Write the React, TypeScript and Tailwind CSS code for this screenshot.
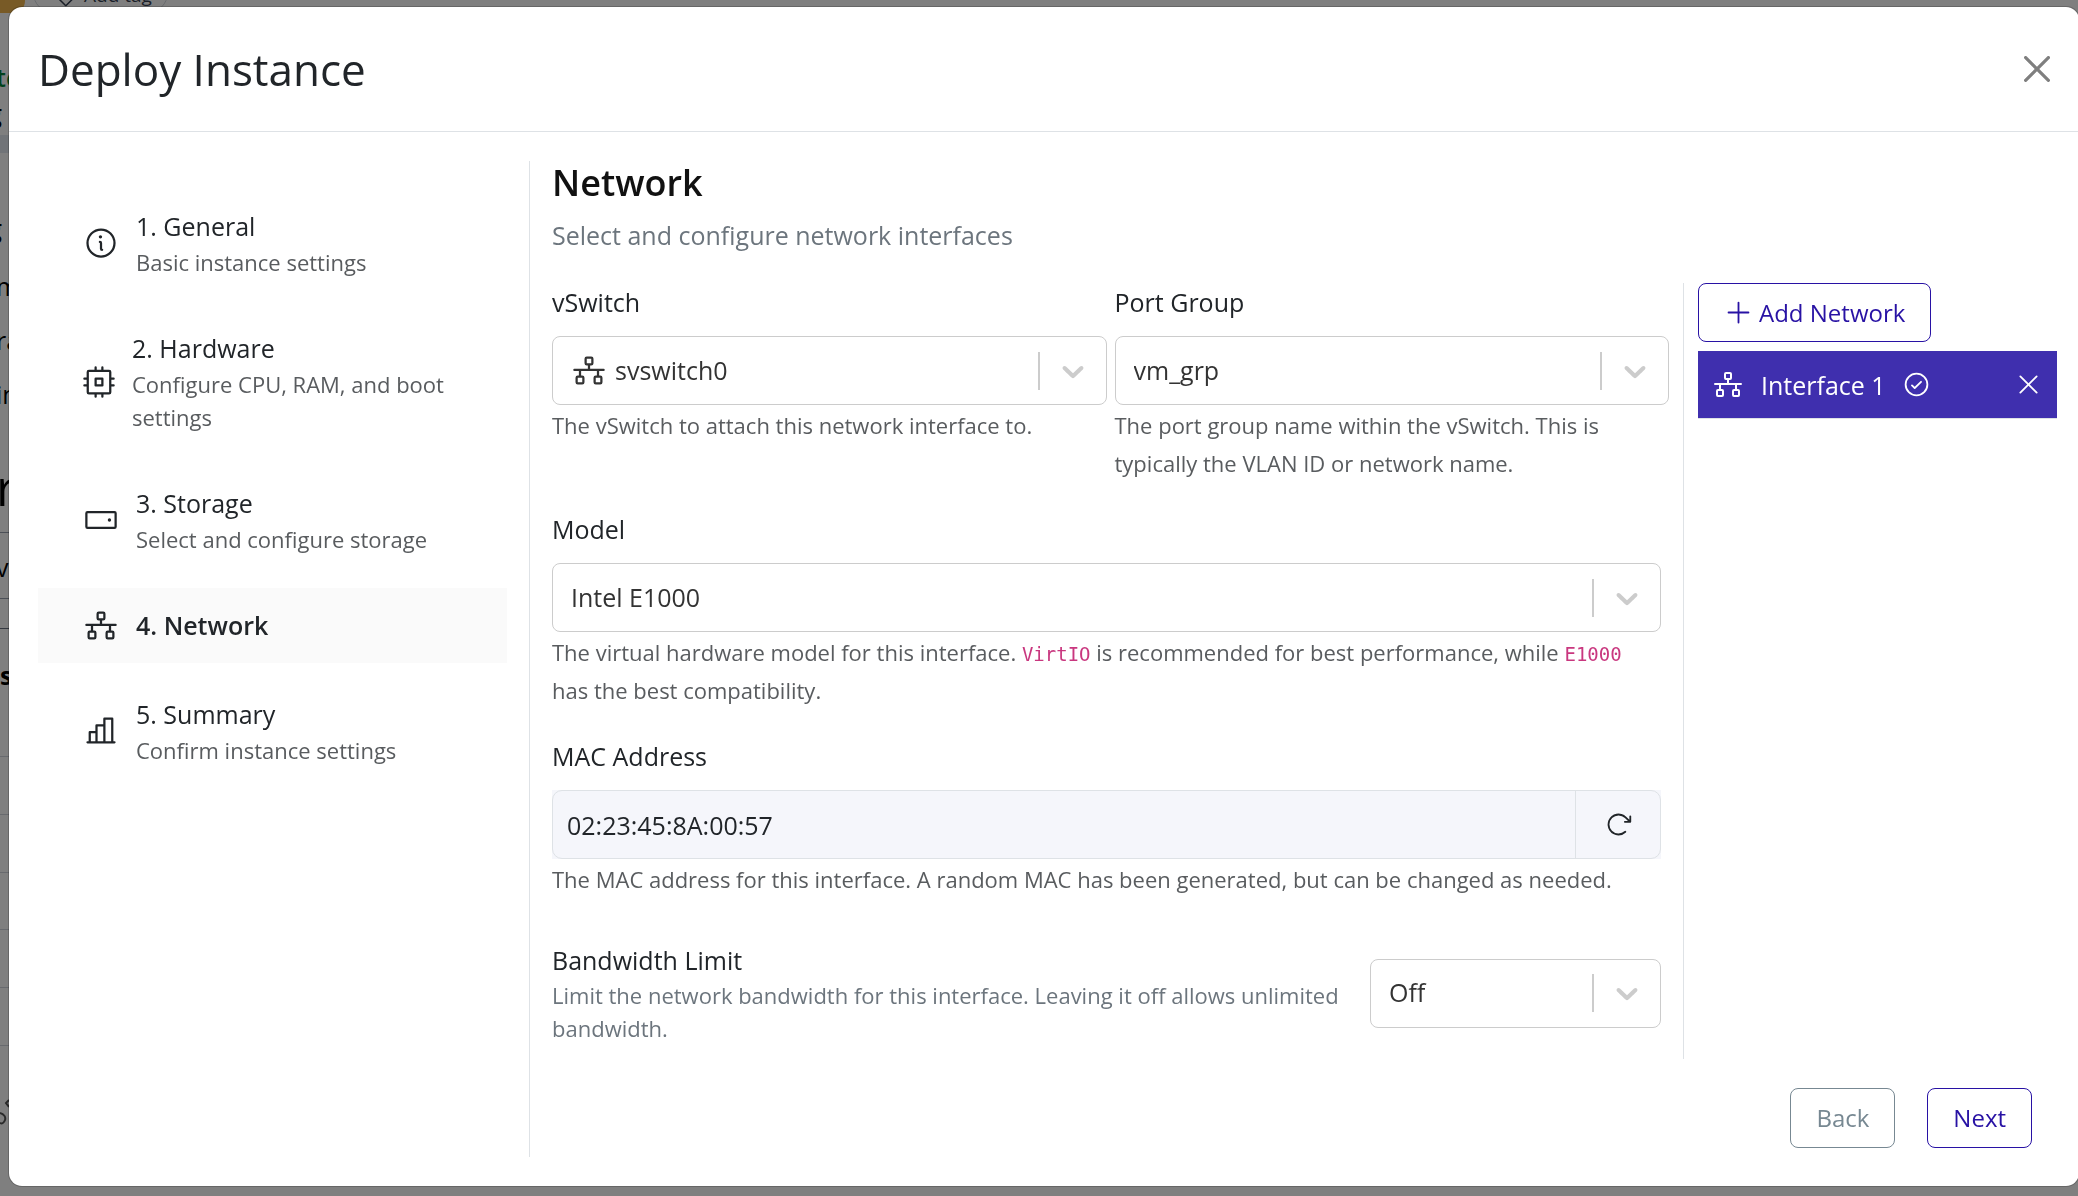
import React, { useState } from 'react';
import {
  PiArrowClockwise,
  PiChartBar,
  PiCheckCircle,
  PiCpu,
  PiHardDrive,
  PiInfo,
  PiNetwork,
  PiPlus,
  PiTag,
  PiX,
} from 'react-icons/pi';

const steps = [
  { title: '1. General', text: 'Basic instance settings', Icon: PiInfo },
  { title: '2. Hardware', text: 'Configure CPU, RAM, and boot settings', Icon: PiCpu, wide: true },
  { title: '3. Storage', text: 'Select and configure storage', Icon: PiHardDrive },
  { title: '4. Network', Icon: PiNetwork, active: true },
  { title: '5. Summary', text: 'Confirm instance settings', Icon: PiChartBar },
];

const Chevron: React.FC = () => (
  <svg viewBox="0 0 20 20" className="h-9 w-9" fill="currentColor" aria-hidden="true">
    <path d="M4.516 7.548c0.436-0.446 1.043-0.481 1.576 0l3.908 3.747 3.908-3.747c0.533-0.481 1.141-0.446 1.574 0 0.436 0.445 0.408 1.197 0 1.615-0.406 0.418-4.695 4.502-4.695 4.502-0.217 0.223-0.502 0.335-0.787 0.335s-0.57-0.112-0.789-0.335c0 0-4.287-4.084-4.695-4.502s-0.436-1.17 0-1.615z" />
  </svg>
);

interface SelectProps {
  id: string;
  options: string[];
  icon?: boolean;
}

const Select: React.FC<SelectProps> = ({ id, options, icon }) => (
  <div className="relative flex h-[69px] w-full rounded-lg border border-[#cccccc] bg-white text-[#333333]">
    {icon && (
      <PiNetwork className="pointer-events-none absolute top-4 left-[18px] h-9 w-9" aria-hidden="true" />
    )}
    <select
      id={id}
      className={`w-full appearance-none rounded-lg bg-transparent pr-[68px] pb-[2px] text-[25px] outline-none ${icon ? 'pl-[62px]' : 'pl-[18px]'}`}
    >
      {options.map((option) => (
        <option key={option}>{option}</option>
      ))}
    </select>
    <div className="pointer-events-none absolute inset-y-0 right-0 flex items-center text-[#cccccc]">
      <span className="h-[38px] w-[2px] bg-[#cccccc]"></span>
      <span className="px-[15px]">
        <Chevron />
      </span>
    </div>
  </div>
);

interface FieldProps {
  id: string;
  label: string;
  help: React.ReactNode;
  children: React.ReactNode;
}

const Field: React.FC<FieldProps> = ({ id, label, help, children }) => (
  <div className="min-w-0 flex-1">
    <label htmlFor={id} className="mb-[15px] block leading-[38px]">{label}</label>
    {children}
    <p className="mt-px text-[22px] leading-[38px] text-[#595c5f]">{help}</p>
  </div>
);

const Code: React.FC<{ children: React.ReactNode }> = ({ children }) => (
  <code className="font-['DejaVu_Sans_Mono',monospace] text-[19px] leading-none text-[#c9377f]">{children}</code>
);

/* Page that stays visible around the dialog */
const PageBehind: React.FC = () => (
  <div className="h-screen overflow-hidden bg-white" aria-hidden="true">
    <div className="flex h-[13px] items-end gap-2">
      <div className="h-[13px] w-[25px] rounded-br-xl bg-[#f0b44c]"></div>
      <div className="flex h-10 w-[135px] items-center gap-2 rounded-full border border-gray-300 pt-1 pl-[18px] text-[19px] text-gray-700">
        <PiTag className="h-6 w-6 shrink-0" />
        <span className="whitespace-nowrap">Add tag</span>
      </div>
    </div>
    <div className="w-[9px] overflow-hidden text-[25px] leading-9 whitespace-nowrap text-black">
      <div className="-ml-1 mt-[46px] font-semibold text-green-700">te</div>
      <div className="-ml-3 h-10 font-semibold">g</div>
      <div className="h-[18px] bg-slate-200"></div>
      <div className="-ml-3 mt-[57px] font-semibold">g</div>
      <div className="-ml-1 mt-[22px]">m</div>
      <div className="-ml-1 mt-[18px]">ra</div>
      <div className="-ml-1 mt-[18px]">in</div>
      <div className="-ml-1 mt-[50px] h-[70px] text-[50px] leading-[50px]">r</div>
      <div className="h-[67px] border-y border-gray-400 pt-4">
        <div className="-ml-1">v,</div>
      </div>
      <div className="h-[30px] border-b border-gray-500"></div>
      <div className="h-[128px] border-b border-gray-300 pt-7 font-bold">s</div>
      <div className="h-[58px] border-b border-gray-300"></div>
      <div className="h-[58px] border-b border-gray-300"></div>
      <div className="h-[57px] border-b border-gray-300"></div>
      <div className="h-[58px] border-b border-gray-300"></div>
      <div className="h-[58px] border-b border-gray-300"></div>
      <svg viewBox="0 0 9 30" className="mt-[50px] h-[30px] w-[9px]" fill="none" stroke="#555" strokeWidth="2">
        <path d="M9 4L6 7L9 11M0 17C4 18 6 21 5 24C4 27 2 28 0 27" />
      </svg>
    </div>
  </div>
);

const App: React.FC = () => {
  const [mac, setMac] = useState('02:23:45:8A:00:57');

  return (
    <div className="font-['Open_Sans',sans-serif] text-[25px] leading-[38px] text-[#212529]">
      <PageBehind />

      <div className="fixed inset-0 flex bg-black/50 pt-[6px] pb-[9px] pl-2">
        <div
          role="dialog"
          aria-labelledby="dialog-title"
          className="-mr-[2px] flex min-w-0 flex-1 flex-col overflow-hidden rounded-[14px] border border-black/20 bg-white bg-clip-padding"
        >
          {/* Header */}
          <div className="flex items-center justify-between border-b border-[#dee2e6] p-[29px]">
            <h1 id="dialog-title" className="text-[44px] leading-[66px]">Deploy Instance</h1>
            <button type="button" aria-label="Close" className="text-black/50">
              <svg viewBox="0 0 16 16" className="h-[26px] w-[26px]" fill="currentColor">
                <path d="M.293.293a1 1 0 0 1 1.414 0L8 6.586 14.293.293a1 1 0 1 1 1.414 1.414L9.414 8l6.293 6.293a1 1 0 0 1-1.414 1.414L8 9.414l-6.293 6.293a1 1 0 0 1-1.414-1.414L6.586 8 .293 1.707a1 1 0 0 1 0-1.414z" />
              </svg>
            </button>
          </div>

          {/* Body */}
          <div className="flex min-h-0 flex-1 py-[29px] pr-[22px] pl-[29px]">
            <nav className="mr-[22px] flex w-[469px] shrink-0 flex-col gap-[14px] pt-7">
              {steps.map(({ title, text, Icon, active, wide }) => (
                <a
                  key={title}
                  href="#"
                  className={`flex items-center py-[18px] pr-10 ${wide ? 'gap-[15px] pl-[43px]' : 'gap-[17px] pl-[45px]'} ${active ? 'bg-[#fafafa] font-semibold' : ''}`}
                >
                  <Icon className="h-9 w-9 shrink-0" />
                  <span>
                    <span className="block leading-[39px]">{title}</span>
                    {text && <span className="block text-[22px] leading-[33px] text-[#595c5f]">{text}</span>}
                  </span>
                </a>
              ))}
            </nav>

            <div className="min-w-0 flex-1 border-l border-[#dee2e6] pl-[22px]">
              <h2 className="mb-[11px] text-[36px] leading-[44px] font-semibold text-[#111111]">Network</h2>
              <p className="mb-[29px] text-[#6c757d]">Select and configure network interfaces</p>

              <div className="flex">
                <form className="min-w-0 flex-1 pr-[14px] pb-[14px]">
                  <div className="mb-7 flex gap-2">
                    <Field id="vswitch" label="vSwitch" help="The vSwitch to attach this network interface to.">
                      <Select id="vswitch" options={['svswitch0']} icon />
                    </Field>
                    <Field
                      id="port-group"
                      label="Port Group"
                      help="The port group name within the vSwitch. This is typically the VLAN ID or network name."
                    >
                      <Select id="port-group" options={['vm_grp']} />
                    </Field>
                  </div>

                  <div className="mb-7 pr-2">
                    <Field
                      id="model"
                      label="Model"
                      help={
                        <>
                          The virtual hardware model for this interface. <Code>VirtIO</Code> is recommended for best
                          performance, while <Code>E1000</Code> has the best compatibility.
                        </>
                      }
                    >
                      <Select id="model" options={['Intel E1000', 'VirtIO']} />
                    </Field>
                  </div>

                  <div className="mb-[43px] pr-2">
                    <Field
                      id="mac"
                      label="MAC Address"
                      help="The MAC address for this interface. A random MAC has been generated, but can be changed as needed."
                    >
                      <div className="bg-[#f5f6fb]">
                        <div className="flex h-[69px] rounded-[10px] border border-[#dee2e6]">
                          <input
                            id="mac"
                            type="text"
                            value={mac}
                            onChange={(e) => setMac(e.target.value)}
                            className="min-w-0 flex-1 bg-transparent pl-[14px] outline-none"
                          />
                          <button
                            type="button"
                            aria-label="Generate MAC address"
                            className="flex w-[85px] items-center justify-center border-l border-[#dee2e6]"
                          >
                            <PiArrowClockwise className="h-[29px] w-[29px]" />
                          </button>
                        </div>
                      </div>
                    </Field>
                  </div>

                  <div className="flex items-center justify-between gap-[28px] pr-2">
                    <div className="flex-1">
                      <label htmlFor="bandwidth" className="block leading-[38px]">Bandwidth Limit</label>
                      <p className="text-[22px] leading-[33px] text-[#6c757d]">
                        Limit the network bandwidth for this interface. Leaving it off allows unlimited bandwidth.
                      </p>
                    </div>
                    <div className="w-[291px]">
                      <Select id="bandwidth" options={['Off', 'On']} />
                    </div>
                  </div>
                </form>

                {/* Interfaces */}
                <div className="w-[374px] shrink-0 border-l border-[#dee2e6] pl-[14px]">
                  <button
                    type="button"
                    className="flex h-[59px] items-center gap-[6px] rounded-lg border border-[#2812a4] px-[25px] text-[24px] text-[#2812a4]"
                  >
                    <PiPlus className="h-[29px] w-[29px]" />
                    Add Network
                  </button>
                  <div className="mt-[9px] flex h-[68px] items-center border-b border-[#dee2e6] bg-[#3f2fae] bg-clip-padding px-[14px] text-white">
                    <PiNetwork className="h-8 w-8" />
                    <span className="mr-4 ml-[17px]">Interface 1</span>
                    <PiCheckCircle className="h-[29px] w-[29px]" />
                    <button type="button" aria-label="Remove interface" className="ml-auto">
                      <PiX className="h-[29px] w-[29px]" />
                    </button>
                  </div>
                </div>
              </div>

              {/* Footer buttons */}
              <div className="mt-[29px] flex justify-end gap-8 pr-[25px] text-[24px]">
                <button type="button" className="h-[60px] rounded-lg border border-[#778892] px-[25px] text-[#778892]">
                  Back
                </button>
                <button type="button" className="h-[60px] rounded-lg border border-[#2812a4] px-[25px] text-[#2812a4]">
                  Next
                </button>
              </div>
            </div>
          </div>
        </div>
      </div>
    </div>
  );
};

export default App;
